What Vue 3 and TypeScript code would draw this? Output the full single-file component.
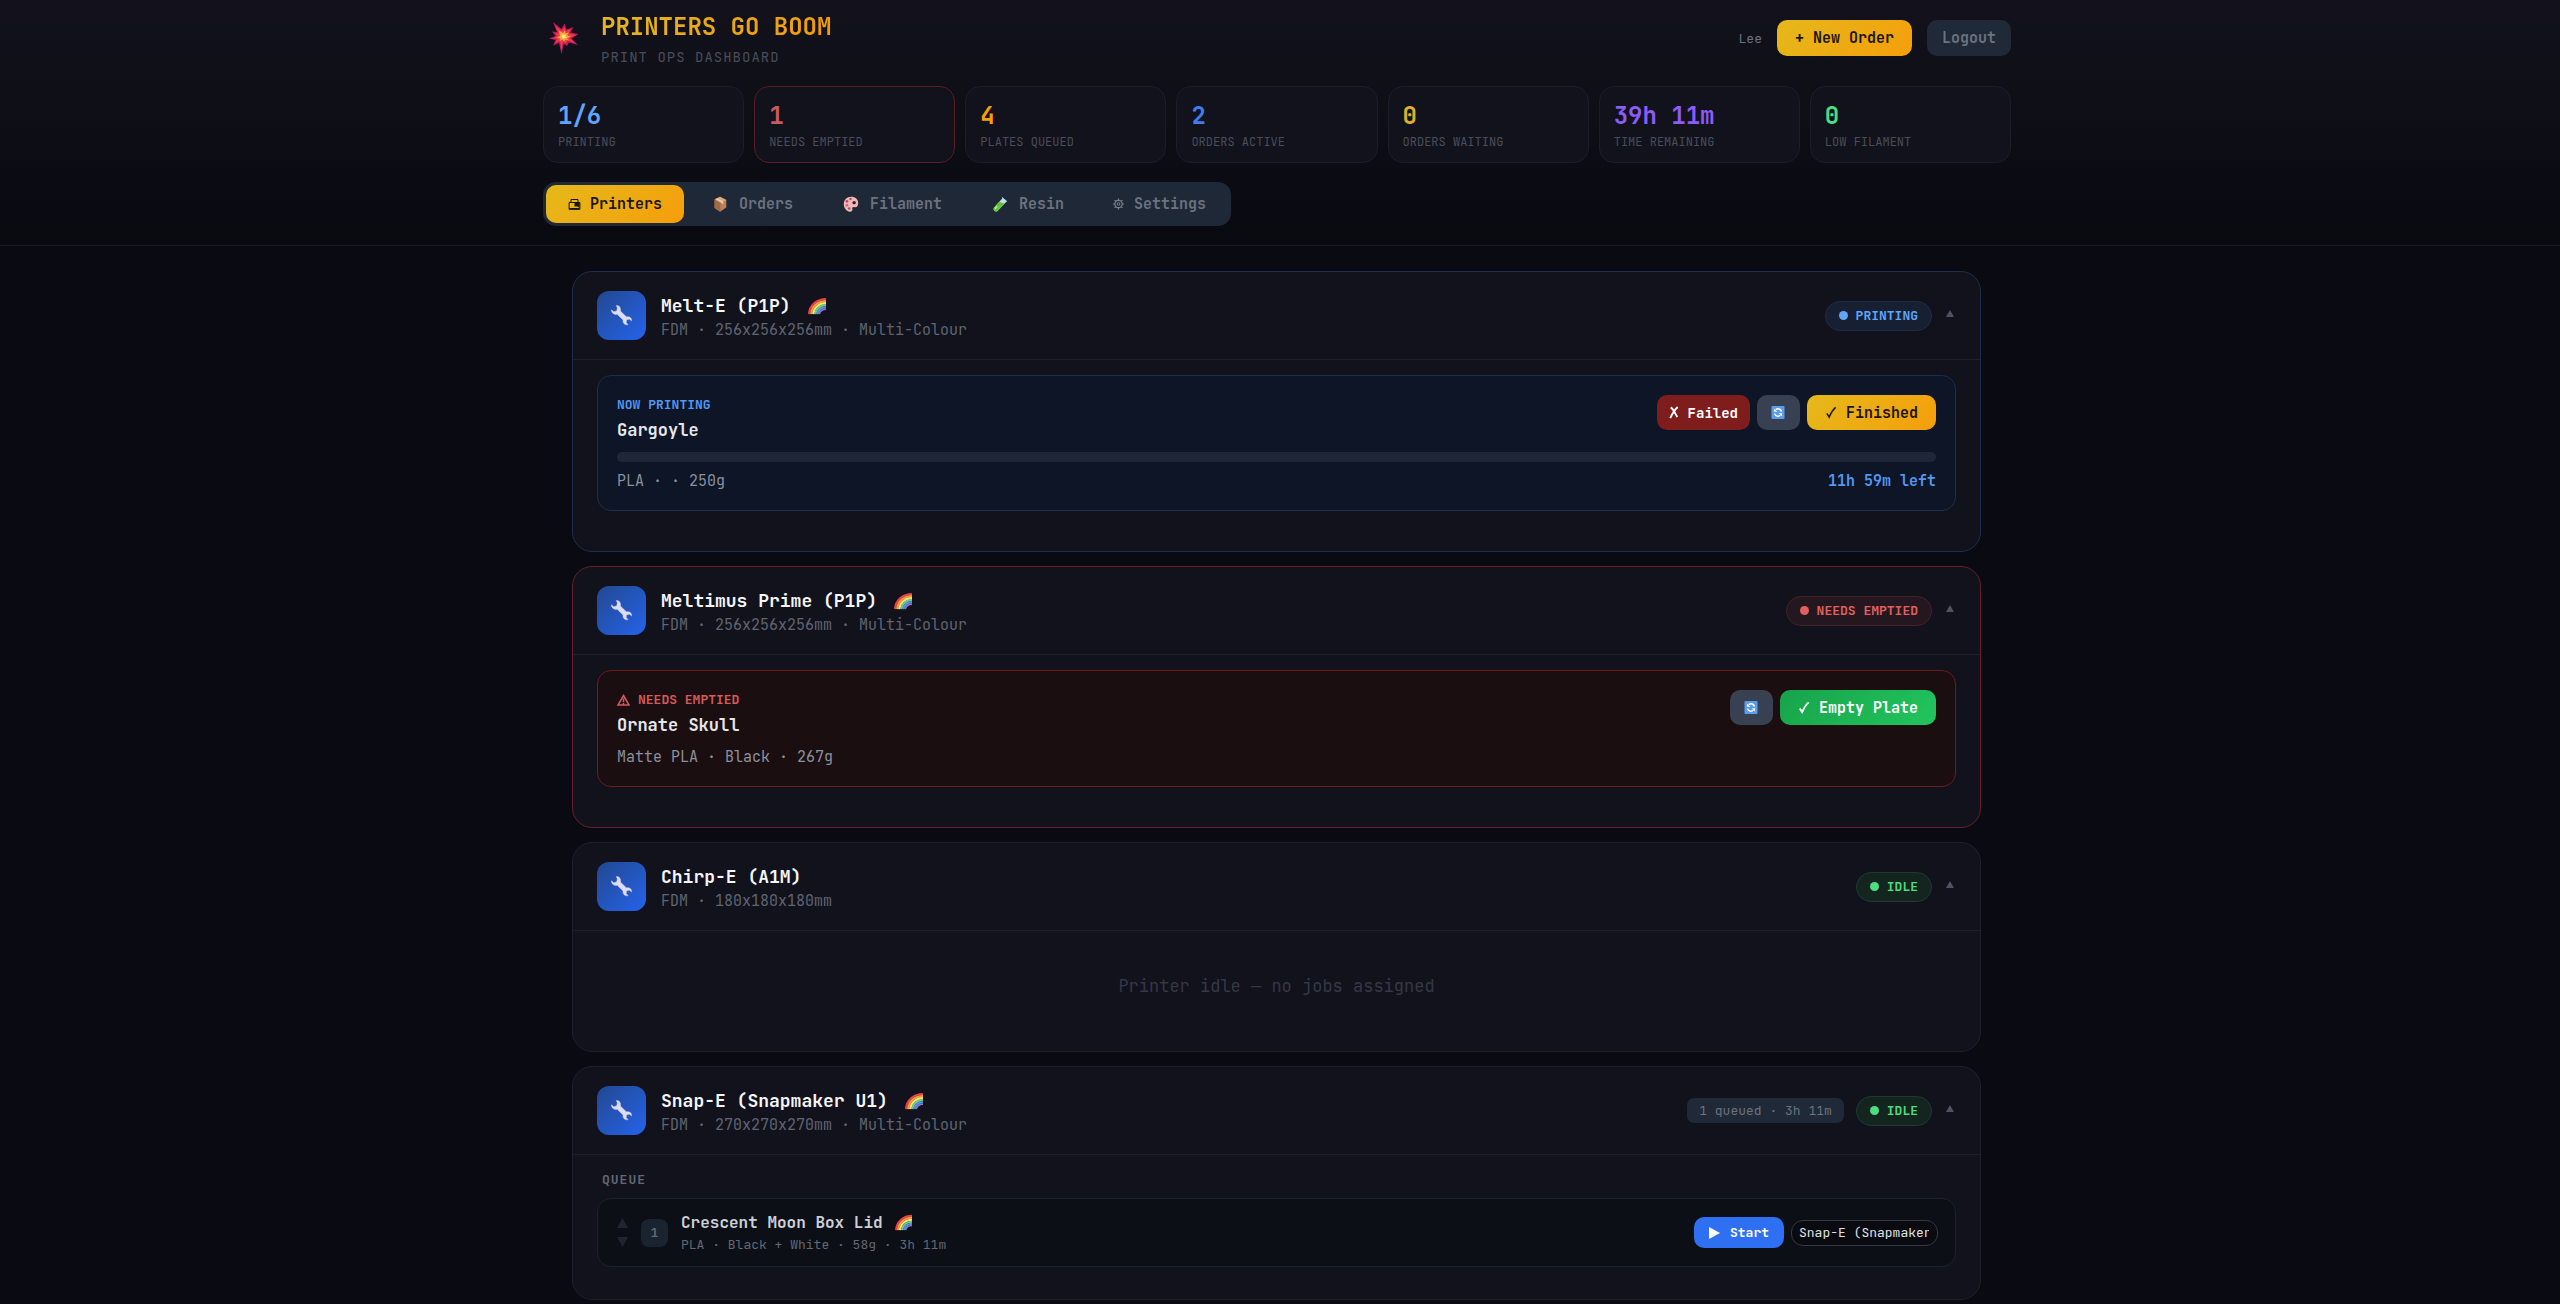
<script setup lang="ts">
import { ref } from 'vue'

type Status = 'printing' | 'empty' | 'idle'

interface QueueItem {
  name: string
  detail: string
  multi: boolean
}

interface Printer {
  name: string
  spec: string
  multi: boolean
  status: Status
  badge: string
  queued?: string
  queue: QueueItem[]
}

const stats = [
  { value: '1/6', label: 'PRINTING', tone: 'sky' },
  { value: '1', label: 'NEEDS EMPTIED', tone: 'red' },
  { value: '4', label: 'PLATES QUEUED', tone: 'orange' },
  { value: '2', label: 'ORDERS ACTIVE', tone: 'blue' },
  { value: '0', label: 'ORDERS WAITING', tone: 'yellow' },
  { value: '39h 11m', label: 'TIME REMAINING', tone: 'purple' },
  { value: '0', label: 'LOW FILAMENT', tone: 'mint' },
]

const tabs = ['Printers', 'Orders', 'Filament', 'Resin', 'Settings']
const activeTab = ref('Printers')

const printers: Printer[] = [
  { name: 'Melt-E (P1P)', spec: 'FDM · 256x256x256mm · Multi-Colour', multi: true, status: 'printing', badge: 'PRINTING', queue: [] },
  { name: 'Meltimus Prime (P1P)', spec: 'FDM · 256x256x256mm · Multi-Colour', multi: true, status: 'empty', badge: 'NEEDS EMPTIED', queue: [] },
  { name: 'Chirp-E (A1M)', spec: 'FDM · 180x180x180mm', multi: false, status: 'idle', badge: 'IDLE', queue: [] },
  {
    name: 'Snap-E (Snapmaker U1)',
    spec: 'FDM · 270x270x270mm · Multi-Colour',
    multi: true,
    status: 'idle',
    badge: 'IDLE',
    queued: '1 queued · 3h 11m',
    queue: [{ name: 'Crescent Moon Box Lid', detail: 'PLA · Black + White · 58g · 3h 11m', multi: true }],
  },
]

const progress = 0
const target = ref('Snap-E (Snapmaker U1)')
</script>

<template>
  <svg class="defs" aria-hidden="true">
    <symbol id="rainbow" viewBox="0 0 20 20">
      <g fill="none" stroke-width="2.4">
        <path d="M1.2 19C1.6 9.500 9.500 2.200 20 2.200" stroke="#e8414e" />
        <path d="M3.500 19C4 10.800 10.600 4.500 20 4.500" stroke="#f79a3c" />
        <path d="M5.800 19C6.200 12.200 12 6.800 20 6.800" stroke="#fbe36a" />
        <path d="M8.100 19C8.500 13.600 13 9.100 20 9.100" stroke="#6cc99a" />
        <path d="M10.400 19C10.700 15 14.300 11.400 20 11.400" stroke="#4b9be0" />
        <path d="M12.400 19C12.700 16.300 15.600 13.500 20 13.500" stroke="#9a6fc9" stroke-width="2" />
      </g>
    </symbol>
    <symbol id="retry" viewBox="0 0 14 14">
      <rect width="14" height="14" rx="1" fill="#5a9df0" />
      <g fill="none" stroke="#fff" stroke-width="1.500">
        <path d="M3.300 8.200A3.700 3.700 0 0 0 9.600 9.800M10.700 5.900A3.700 3.700 0 0 0 4.600 4" />
      </g>
      <path d="M2.600 2.600v3.600h3.600zM11.400 11.400V7.800H7.800z" fill="#fff" />
    </symbol>
  </svg>

  <div class="page">
    <header class="top">
      <div class="wrap">
        <div class="brand-row">
          <svg class="logo" viewBox="0 0 30 32" aria-hidden="true">
            <path d="M4 0L12.500 7 15.500 1.500 17.500 7.500 24.500 5 21.500 10.500 29.500 12 22.500 16.500 29 23 20 20.500 18 24 14.800 22 12.500 32 10 21 4 23.500 6.500 18 0 16.500 6.500 14 3 9.500 8 10z" fill="#c2185f" />
            <path d="M6 3.500L13 9 15.500 5 16.800 9.200 22 7 19.500 11.500 27 13 20.500 16 26 21 18.500 18.500 17 21.500 14 19.500 12.500 28 11 19 6 21 8.500 17 3.500 16.300 8.500 14 6 11 9.500 11.500z" fill="#ef3f42" />
            <path d="M10 8.500L14 11 16 8.500 16.500 11.500 20 10.500 18 13.500 22 14.500 18 16.200 20 18.500 16.500 17.500 15 19.500 13.500 17.500 11 19 11.500 16.500 8 15.800 11 14z" fill="#fba63c" />
            <path d="M13.500 11.500L15 13 17 12.500 16.300 14.500 17.500 16 15 16 13.500 17 13.200 15 12 14.300 13.500 13.500z" fill="#ffe98a" />
          </svg>
          <div class="brand">
            <h1>PRINTERS GO BOOM</h1>
            <p>PRINT OPS DASHBOARD</p>
          </div>
          <div class="account">
            <span class="user">Lee</span>
            <button type="button" class="btn gold">+ New Order</button>
            <button type="button" class="btn logout">Logout</button>
          </div>
        </div>

        <section class="stats" aria-label="Overview">
          <div v-for="s in stats" :key="s.label" class="stat" :class="s.tone">
            <div class="value">{{ s.value }}</div>
            <div class="label">{{ s.label }}</div>
          </div>
        </section>

        <nav class="tabs">
          <button
            v-for="t in tabs"
            :key="t"
            type="button"
            :class="{ active: t === activeTab }"
            @click="activeTab = t"
          >
            <svg v-if="t === 'Printers'" class="small" viewBox="0 0 12 14" aria-hidden="true">
              <path d="M2.500 5.500V2.500h7v3M.6 12.400V5.500h10.800v6.900z" fill="none" stroke="#1a1405" stroke-width="1" />
              <path d="M6 6H11v5L9 9.500H6zM1 11h10v1H1z" fill="#1a1405" />
            </svg>
            <svg v-else-if="t === 'Orders'" viewBox="0 0 20 20" aria-hidden="true">
              <path d="M10 2l7 3.500v8.500l-7 4.500-6-4V5z" fill="#b98258" />
              <path d="M10 2l7 3.500-6.500 3L4 5z" fill="#d9a77c" />
              <path d="M4 5l6.500 3.500v10L4 14.500z" fill="#a06a45" />
              <path d="M7 3.500l6.500 3.500v3l-2-.8V8L5 4.500z" fill="#e8cdb0" />
            </svg>
            <svg v-else-if="t === 'Filament'" viewBox="0 0 20 20" aria-hidden="true">
              <path d="M10 2c5 0 8 3 8 7s-2 5-4 4.500-3 .5-2.500 2-.5 3-2.500 3c-4 0-7-4-7-8.500S5.500 2 10 2z" fill="#efb7b6" />
              <circle cx="13.500" cy="8.500" r="1.900" fill="#3a1b20" />
              <circle cx="5.500" cy="7" r="1.500" fill="#d33f4f" />
              <circle cx="9.500" cy="4.500" r="1.400" fill="#b04a86" />
              <circle cx="5.500" cy="11.500" r="1.500" fill="#e0607a" />
              <circle cx="8" cy="15" r="1.400" fill="#9a5a66" />
            </svg>
            <svg v-else-if="t === 'Resin'" viewBox="0 0 20 20" aria-hidden="true">
              <path d="M12 2l6 5-1.500 1L7 18c-2 1.500-5-1-4-3.500L12.500 4z" fill="#bfe0ea" />
              <path d="M9 7.500l6 2L7 18c-2 1.500-5-1-4-3.500z" fill="#63c23c" />
              <path d="M6 12l1.500 1L5 16l-1-1z" fill="#c5f08c" />
            </svg>
            <svg v-else class="small" viewBox="0 0 12 14" aria-hidden="true">
              <g fill="none" stroke="#7a818f">
                <circle cx="6" cy="7" r="3.700" stroke-width="1.200" />
                <circle cx="6" cy="7" r="1.300" />
                <path d="M6 1.500v1.800M6 10.700v1.800M.5 7h1.800M9.700 7h1.800M2.100 3.100l1.300 1.300M8.600 9.600l1.300 1.300M2.100 10.900l1.300-1.300M8.600 4.400l1.300-1.300" stroke-width="1.200" />
              </g>
            </svg>
            {{ t }}
          </button>
        </nav>
      </div>
    </header>

    <main class="wrap list">
      <article v-for="p in printers" :key="p.name" class="card" :class="p.status">
        <div class="card-head">
          <div class="tile">
            <svg viewBox="0 0 24 24" aria-hidden="true">
              <path
                d="M6.500 1.500C9.200 1.200 11.300 3.300 11 6L10.900 7.400 17 13.300 18.300 13.200C21 13 23 15 22.600 17.700L20.300 15.800 17.400 16.400 16.900 19.200 18.900 21.600C16.200 22.400 13.400 20.400 13.500 17.700L13.600 16.600 7.500 10.800 6.300 10.900C3.500 11.100 1.300 8.700 1.500 6L3.900 8 6.900 7.200 7.700 4.200z"
                fill="#dedcf3"
                stroke="#dedcf3"
                stroke-width="0.4"
                stroke-linejoin="round"
              />
            </svg>
          </div>
          <div class="ident">
            <h2>
              {{ p.name }}
              <svg v-if="p.multi" class="rainbow" role="img" aria-label="Multi-colour"><use href="#rainbow" /></svg>
            </h2>
            <p>{{ p.spec }}</p>
          </div>
          <span v-if="p.queued" class="queued">{{ p.queued }}</span>
          <span class="badge"><i></i>{{ p.badge }}</span>
          <button type="button" class="fold" aria-label="Collapse">
            <svg viewBox="0 0 8 7"><path d="M4 0l4 7H0z" fill="currentColor" /></svg>
          </button>
        </div>

        <div v-if="p.status === 'printing'" class="card-body">
          <div class="job">
            <div class="job-top">
              <div>
                <div class="job-label">NOW PRINTING</div>
                <h3>Gargoyle</h3>
              </div>
              <div class="actions">
                <button type="button" class="btn fail">
                  <svg class="mark" viewBox="0 0 10 14" aria-hidden="true">
                    <path d="M1.500 1.500c3 2 4.500 6 7 10.500M9 1C5.500 4 3 8.500 1 13" fill="none" stroke="currentColor" stroke-width="2" />
                  </svg>
                  Failed
                </button>
                <button type="button" class="btn retry" aria-label="Restart"><svg><use href="#retry" /></svg></button>
                <button type="button" class="btn gold done">
                  <svg class="check" viewBox="0 0 12 14" aria-hidden="true">
                    <path d="M1.500 8l2.500 4C6 7.500 8 4 11 1.500" fill="none" stroke="currentColor" stroke-width="1.600" />
                  </svg>
                  Finished
                </button>
              </div>
            </div>
            <div class="track" role="progressbar" :aria-valuenow="progress"><div :style="{ width: progress + '%' }"></div></div>
            <div class="meta"><span>PLA · · 250g</span><strong>11h 59m left</strong></div>
          </div>
        </div>

        <div v-else-if="p.status === 'empty'" class="card-body">
          <div class="job alert">
            <div class="job-top">
              <div>
                <div class="job-label">
                  <svg class="warn" viewBox="0 0 13 12" aria-hidden="true">
                    <path d="M6.500 1.500L12 11H1zM6.500 4.500v3.500M6.500 8.800v1.400" fill="none" stroke="currentColor" stroke-width="1.500" />
                  </svg>
                  NEEDS EMPTIED
                </div>
                <h3>Ornate Skull</h3>
              </div>
              <div class="actions">
                <button type="button" class="btn retry" aria-label="Restart"><svg><use href="#retry" /></svg></button>
                <button type="button" class="btn green done">
                  <svg class="check" viewBox="0 0 12 14" aria-hidden="true">
                    <path d="M1.500 8l2.500 4C6 7.500 8 4 11 1.500" fill="none" stroke="currentColor" stroke-width="2" />
                  </svg>
                  Empty Plate
                </button>
              </div>
            </div>
            <div class="meta"><span>Matte PLA · Black · 267g</span></div>
          </div>
        </div>

        <div v-else-if="p.queue.length" class="card-body queue">
          <div class="queue-title">QUEUE</div>
          <div v-for="(q, i) in p.queue" :key="q.name" class="queue-row">
            <div class="order">
              <button type="button" aria-label="Move up"><svg viewBox="0 0 11 10"><path d="M5.500 0L11 10H0z" fill="currentColor" /></svg></button>
              <button type="button" aria-label="Move down"><svg viewBox="0 0 11 10"><path d="M5.500 10L11 0H0z" fill="currentColor" /></svg></button>
            </div>
            <span class="pos">{{ i + 1 }}</span>
            <div class="queue-info">
              <h4>
                {{ q.name }}
                <svg v-if="q.multi" class="rainbow" role="img" aria-label="Multi-colour"><use href="#rainbow" /></svg>
              </h4>
              <p>{{ q.detail }}</p>
            </div>
            <button type="button" class="btn start">
              <svg viewBox="0 0 11 12" aria-hidden="true"><path d="M0 0l11 6-11 6z" fill="currentColor" /></svg>
              Start
            </button>
            <select v-model="target" aria-label="Printer">
              <option v-for="o in printers" :key="o.name">{{ o.name }}</option>
            </select>
          </div>
        </div>

        <div v-else class="none">Printer idle — no jobs assigned</div>
      </article>
    </main>
  </div>
</template>

<style>
body {
  background: #0a0a12;
}
</style>

<style scoped>
* {
  box-sizing: border-box;
  margin: 0;
}

.defs {
  position: absolute;
  width: 0;
  height: 0;
}

.page,
button,
select {
  font-family: 'JetBrains Mono', 'DejaVu Sans Mono', monospace;
}

.page {
  padding-right: 6px;
  font-size: 15px;
  color: #e5e7eb;
}

button {
  border: 0;
  padding: 0;
  background: none;
  color: inherit;
  cursor: pointer;
}

button svg {
  flex: none;
}

.wrap {
  max-width: 1468px;
  margin: 0 auto;
}

.top {
  margin-right: -6px;
  padding: 9px 6px 19px 0;
  background: linear-gradient(180deg, #13121c, #080a10);
  border-bottom: 1px solid #191b26;
}

.brand-row {
  display: flex;
  align-items: center;
}

.logo {
  width: 30px;
  height: 32px;
  margin: 0 22px 0 6px;
}

h1 {
  width: max-content;
  font-size: 24px;
  line-height: 35px;
  background: linear-gradient(135deg, #e3b822, #f0980f);
  background-clip: text;
  color: transparent;
}

.brand p {
  margin-top: 3px;
  font-size: 14px;
  line-height: 20px;
  letter-spacing: 1px;
  color: #484d5a;
}

.account {
  display: flex;
  align-items: center;
  gap: 15px;
  margin-left: auto;
}

.user {
  font-size: 13px;
  color: #6b7280;
}

.btn {
  display: flex;
  align-items: center;
  justify-content: center;
  height: 36px;
  padding: 0 18px;
  border-radius: 10px;
  font-size: 15px;
  font-weight: 700;
  white-space: nowrap;
}

.gold {
  background: linear-gradient(135deg, #e5b91b, #f59e0b);
  color: #1c1508;
}

.green {
  background: linear-gradient(135deg, #17a34a, #22c55e);
  color: #fff;
}

.logout {
  padding: 0 15px;
  background: #1f2937;
  color: #6b7280;
}

.stats {
  display: grid;
  grid-template-columns: repeat(7, 1fr);
  gap: 10px;
  margin-top: 19px;
}

.stat {
  padding: 12px 14px 11px;
  border: 1px solid #1b1e29;
  border-radius: 15px;
  background: #12121c;
}

.value {
  font-size: 24px;
  font-weight: 700;
  line-height: 34px;
}

.label {
  margin-top: 1px;
  font-size: 12px;
  line-height: 17px;
  color: #484d5a;
}

.sky .value { color: #60a5fa; }
.red .value { color: #c85a62; }
.red { border-color: #5c1c26; }
.orange .value { color: #f59e0b; }
.blue .value { color: #3f7ef0; }
.yellow .value { color: #e0b02a; }
.purple .value { color: #8b5cf6; }
.mint .value { color: #4ade80; }

.tabs {
  display: flex;
  gap: 4px;
  width: max-content;
  margin-top: 19px;
  padding: 3px;
  border-radius: 13px;
  background: #1f2836;
}

.tabs button {
  display: flex;
  align-items: center;
  gap: 9px;
  height: 38px;
  padding: 0 22px;
  border-radius: 10px;
  font-size: 15px;
  font-weight: 700;
  color: #6b7280;
}

.tabs button.active {
  background: linear-gradient(135deg, #e5b91b, #f59e0b);
  color: #1c1508;
}

.tabs svg {
  width: 20px;
  height: 18px;
}

.tabs svg.small {
  width: 13px;
  height: 14px;
}

.list {
  display: flex;
  flex-direction: column;
  gap: 14px;
  padding: 25px 30px 0 29px;
}

.card {
  border: 1px solid #1d212c;
  border-radius: 20px;
  background: #12121c;
}

.card.printing { border-color: #1c2f4a; }
.card.empty { border-color: #65202a; }

.card-head {
  display: flex;
  align-items: center;
  height: 88px;
  padding: 0 26px 0 24px;
  border-bottom: 1px solid #1c212c;
}

.tile {
  display: flex;
  align-items: center;
  justify-content: center;
  width: 49px;
  height: 49px;
  border-radius: 12px;
  background: linear-gradient(135deg, #224890, #2563eb);
}

.tile svg {
  width: 23px;
  height: 23px;
}

.ident {
  margin: 3px auto 0 15px;
}

.rainbow {
  width: 20px;
  height: 18px;
}

h2,
h4 {
  display: flex;
  align-items: center;
}

h2 {
  gap: 16px;
  font-size: 18px;
  line-height: 26px;
  color: #f5f6f8;
}

.ident p {
  line-height: 22px;
  color: #5f6572;
}

.queued {
  margin-right: 12px;
  padding: 0 12px;
  border-radius: 7px;
  background: #1f2937;
  font-size: 13px;
  line-height: 25px;
  color: #6b7280;
}

.badge {
  display: flex;
  align-items: center;
  gap: 8px;
  height: 30px;
  padding: 0 13px;
  border: 1px solid;
  border-radius: 15px;
  font-size: 13px;
  font-weight: 700;
}

.badge i {
  width: 9px;
  height: 9px;
  border-radius: 50%;
  background: currentColor;
}

.badge { color: #4ade80; background: #14241f; border-color: #1d3b2e; }
.printing .badge { color: #60a5fa; background: #172033; border-color: #1d2c47; }
.empty .badge { color: #e0605f; background: #25171f; border-color: #43222a; }

.fold {
  display: flex;
  margin: 0 0 4px 14px;
  color: #4f5360;
}

.fold svg {
  width: 8px;
  height: 7px;
}

.card-body {
  padding: 15px 24px 40px;
}

.card-body.queue {
  padding-bottom: 32px;
}

.job {
  padding: 19px;
  padding-bottom: 18px;
  border: 1px solid #1b2f4a;
  border-radius: 14px;
  background: #0d1527;
}

.job.alert {
  border-color: #6a1c20;
  background: #1b0e10;
}

.job-top {
  display: flex;
  align-items: flex-start;
  justify-content: space-between;
}

.job-label {
  display: flex;
  align-items: center;
  gap: 8px;
  font-size: 13px;
  font-weight: 700;
  line-height: 20px;
  color: #5497ee;
}

.alert .job-label {
  color: #d65a5a;
}

.warn {
  width: 13px;
  height: 12px;
}

h3 {
  margin-top: 3px;
  font-size: 17px;
  line-height: 25px;
}

.actions {
  display: flex;
  gap: 7px;
}

.actions .btn {
  height: 35px;
}

.actions .done {
  gap: 9px;
  padding: 0 18px;
}

.actions .fail {
  gap: 9px;
  padding: 0 12px;
  background: #7f1d1d;
  font-size: 14px;
  color: #fff;
}

.actions .retry {
  width: 43px;
  padding: 0;
  background: #374151;
}

.retry svg {
  width: 14px;
  height: 13px;
}

.mark {
  width: 10px;
  height: 13px;
}

.check {
  width: 12px;
  height: 13px;
}

.track {
  height: 10px;
  margin-top: 9px;
  border-radius: 5px;
  background: #1f2637;
}

.track div {
  height: 100%;
  border-radius: 5px;
  background: #3b82f6;
}

.meta {
  display: flex;
  justify-content: space-between;
  margin-top: 8px;
  line-height: 22px;
  color: #8b919e;
}

.meta strong {
  color: #5497ee;
}

.none {
  padding: 43px 24px 52px;
  font-size: 17px;
  line-height: 25px;
  text-align: center;
  color: #353846;
}

.queue-title {
  padding: 0 5px;
  margin-bottom: 8px;
  font-size: 13px;
  font-weight: 700;
  letter-spacing: 1px;
  line-height: 20px;
  color: #626875;
}

.queue-row {
  display: flex;
  align-items: center;
  height: 69px;
  padding: 0 17px 0 19px;
  border: 1px solid #1c212b;
  border-radius: 14px;
  background: #0c0f16;
}

.order {
  display: flex;
  flex-direction: column;
  gap: 9px;
  color: #20252f;
}

.order button,
.order svg {
  display: block;
  width: 11px;
  height: 10px;
}

.pos {
  width: 27px;
  margin: 0 13px;
  border-radius: 8px;
  background: #1a2430;
  font-size: 13px;
  font-weight: 700;
  line-height: 28px;
  text-align: center;
  color: #626875;
}

.queue-info {
  margin-right: auto;
}

h4 {
  gap: 12px;
  font-size: 16px;
  line-height: 24px;
  color: #ccd0d8;
}

h4 .rainbow {
  width: 17px;
  height: 17px;
}

.queue-info p {
  font-size: 13px;
  line-height: 20px;
  color: #626875;
}

.start {
  gap: 10px;
  height: 31px;
  padding: 0 15px;
  background: #2f6ff2;
  font-size: 13px;
  color: #fff;
}

.start svg {
  width: 11px;
  height: 12px;
}

select {
  appearance: none;
  width: 147px;
  height: 26px;
  margin-left: 7px;
  padding: 0 8px 0 7px;
  border: 1px solid #343943;
  border-radius: 12px;
  background: #0a0b10;
  font-size: 13px;
  color: #e0e2e6;
}
</style>
